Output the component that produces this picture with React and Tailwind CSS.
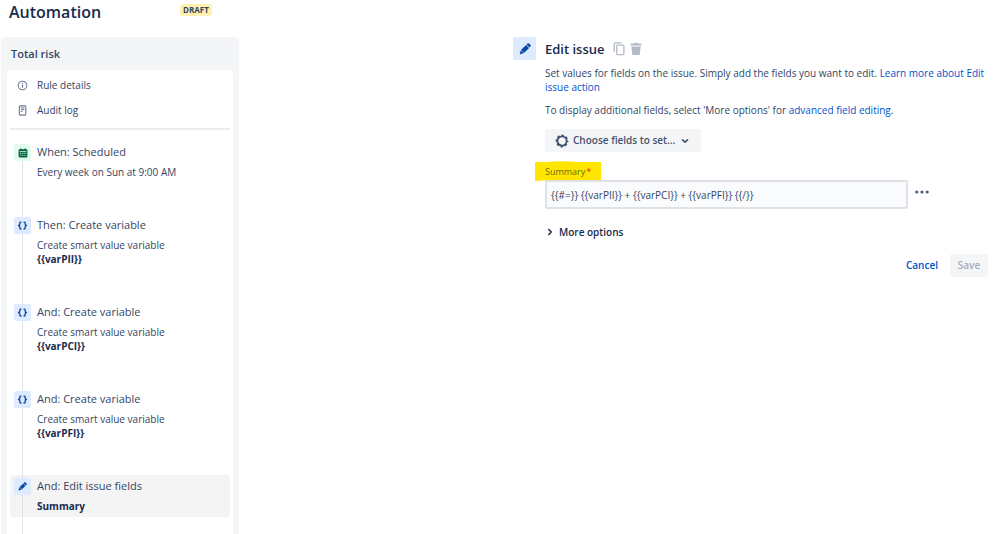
const steps = [
  { title: "When: Scheduled", text: "Every week on Sun at 9:00 AM", icon: "calendar" },
  { title: "Then: Create variable", text: "Create smart value variable", value: "{{varPII}}", icon: "braces" },
  { title: "And: Create variable", text: "Create smart value variable", value: "{{varPCI}}", icon: "braces" },
  { title: "And: Create variable", text: "Create smart value variable", value: "{{varPFI}}", icon: "braces" },
  { title: "And: Edit issue fields", value: "Summary", icon: "pencil", selected: true },
];

function Pencil({ className }) {
  return (
    <svg viewBox="0 0 16 16" className={className} fill="currentColor" aria-hidden="true">
      <path d="M9.300 2.600 13.400 6.700 7.100 13 3 8.900Z" />
      <path d="M9.900 2 10.900 1a2 2 0 0 1 2.800 0l1.300 1.300a2 2 0 0 1 0 2.800l-1 1Z" />
      <path d="M2.700 9.300 6.700 13.300 1.700 15a.6.6 0 0 1-.7-.7Z" />
    </svg>
  );
}

function Braces() {
  return (
    <svg viewBox="0 0 12 12" className="size-[11px]" fill="none" stroke="currentColor" strokeWidth="1.400" strokeLinecap="round" strokeLinejoin="round" aria-hidden="true">
      <path d="M4.400 2.200H4Q3.100 2.200 3.100 3.100V4.700Q3.100 5.700 1.700 6Q3.100 6.300 3.100 7.300V8.900Q3.100 9.800 4 9.800h.4" />
      <path d="M7.600 2.200H8Q8.900 2.200 8.900 3.100V4.700Q8.900 5.700 10.300 6Q8.900 6.300 8.900 7.300V8.900Q8.900 9.800 8 9.800h-.4" />
    </svg>
  );
}

function Calendar() {
  return (
    <svg viewBox="0 0 10 10" className="size-[10px]" aria-hidden="true">
      <path fill="currentColor" d="M1.600 1.200h.6V.5h1.300v.7h3V.5h1.300v.7h.6a1 1 0 0 1 1 1V8.500a1 1 0 0 1-1 1H1.600a1 1 0 0 1-1-1V2.200a1 1 0 0 1 1-1Z" />
      <path stroke="#e3fcef" strokeWidth=".8" d="M1.600 3.600H8.400" />
      <path stroke="#b5e6cd" strokeWidth=".9" strokeDasharray="1.1 .7" d="M2 5.400H8.200M2 7.300H8.200" />
    </svg>
  );
}

function StepIcon({ name }) {
  if (name === "calendar") {
    return <span className="flex size-[17px] shrink-0 items-center justify-center rounded-xs bg-[#e3fcef] text-[#006644]"><Calendar /></span>;
  }
  return (
    <span className="flex size-[17px] shrink-0 items-center justify-center rounded-xs bg-[#deebff] text-[#0747a6]">
      {name === "braces" ? <Braces /> : <Pencil className="size-[9px]" />}
    </span>
  );
}

function Step({ step, first }) {
  return (
    <li>
      <button type="button" className={`flex w-full gap-[6px] rounded-[3px] pl-1 text-left ${step.selected ? "bg-[#f4f4f5]" : ""}`}>
        <span className="flex w-[17px] flex-col items-center self-stretch">
          <span className={`h-[3px] w-px ${first ? "" : "bg-[#dfe1e6]"}`} />
          <StepIcon name={step.icon} />
          <span className="w-px flex-1 bg-[#dfe1e6]" />
        </span>
        <span className="flex flex-col pt-[2px] pb-1 text-[10px] leading-[14px]">
          <span className="mb-[5px] text-[11px] leading-[17px]">{step.title}</span>
          {step.text && <span>{step.text}</span>}
          {step.value && <strong className="font-bold text-[#172b4d]">{step.value}</strong>}
        </span>
      </button>
      <div className="flex h-[31px] pl-1">
        <span className="flex w-[17px] justify-center"><span className="w-px bg-[#dfe1e6]" /></span>
      </div>
    </li>
  );
}

function Sidebar() {
  return (
    <aside className="w-[238px] shrink-0 rounded-t-[5px] bg-[#f4f5f7] px-[6px]">
      <h2 className="px-1 pt-2 pb-[7px] text-[11px] leading-[18px] font-semibold text-[#344563]">Total risk</h2>
      <div className="rounded-t-[5px] bg-white px-[3px] pt-[3px]">
        <nav className="flex flex-col border-b-2 border-[#ebecf0] pb-[5px] text-[10px]">
          <a href="#details" className="flex h-[25px] items-center gap-[9px] pl-[7px]">
            <svg viewBox="0 0 12 12" className="size-[11px] text-[#6b778c]" fill="none" stroke="currentColor" aria-hidden="true">
              <circle cx="6" cy="6" r="4.700" strokeWidth="1.100" />
              <path d="M6 5.500V8.500M6 3.400V4.500" strokeWidth="1.300" />
            </svg>
            Rule details
          </a>
          <a href="#audit" className="flex h-[25px] items-center gap-[9px] pl-[7px]">
            <svg viewBox="0 0 12 12" className="size-[11px] text-[#6b778c]" fill="none" stroke="currentColor" aria-hidden="true">
              <rect x="2.600" y="1" width="7" height="10" rx="1" strokeWidth="1.200" />
              <path d="M4.200 3.400H8M4.200 5.200H8M4.200 7H6" strokeWidth="1.100" />
            </svg>
            Audit log
          </a>
        </nav>
        <ol className="pt-[11px]">
          {steps.map((step, i) => <Step key={i} step={step} first={i === 0} />)}
        </ol>
      </div>
    </aside>
  );
}

function Gear() {
  return (
    <svg viewBox="0 0 14 14" className="size-[14px]" fill="none" stroke="currentColor" aria-hidden="true">
      <circle cx="7" cy="7" r="4.600" strokeWidth="1.800" />
      <circle cx="7" cy="7" r="5.700" strokeWidth="1.400" strokeDasharray="2.400 2.077" strokeDashoffset="1.200" />
    </svg>
  );
}

function EditIssue() {
  return (
    <main className="flex w-[475px] gap-[9px]">
      <span className="flex size-[23px] shrink-0 items-center justify-center rounded-xs bg-[#deebff] text-[#0747a6]">
        <Pencil className="size-[12px]" />
      </span>
      <form className="min-w-0 flex-1" onSubmit={(e) => e.preventDefault()}>
        <div className="flex h-6 items-center">
          <h2 className="mr-2 text-[13px] leading-5 font-semibold text-[#172b4d]">Edit issue</h2>
          <button type="button" aria-label="Copy" className="mr-[5px] text-[#b3bac5]">
            <svg viewBox="0 0 12 14" className="h-[14px] w-[12px]" fill="none" stroke="currentColor" strokeWidth="1.300" aria-hidden="true">
              <path d="M1.200 9.800V1.700a.8.8 0 0 1 .8-.8H8.400" />
              <rect x="3.700" y="3.200" width="7.200" height="9.400" rx=".9" />
            </svg>
          </button>
          <button type="button" aria-label="Delete" className="text-[#b3bac5]">
            <svg viewBox="0 0 12 14" className="h-[14px] w-[12px]" fill="currentColor" aria-hidden="true">
              <path d="M.5 2.200a.6.6 0 0 1 .6-.6H4L4.600.8H7.400L8 1.600h2.900a.6.6 0 0 1 .6.600V3.500H.5ZM1.300 4.500h9.400L9.800 12a1 1 0 0 1-1 .9H3.200a1 1 0 0 1-1-.9Z" />
            </svg>
          </button>
        </div>
        <p className="mt-[5px] text-[10px] leading-[14px]">
          Set values for fields on the issue. Simply add the fields you want to edit.{" "}
          <a href="#learn" className="text-[#0052cc]">Learn more about Edit issue action</a>
        </p>
        <p className="mt-[9px] text-[10px] leading-[14px]">
          To display additional fields, select 'More options' for{" "}
          <a href="#advanced" className="text-[#0052cc]">advanced field editing</a>.
        </p>
        <button type="button" className="mt-3 flex h-[23px] items-center rounded-xs bg-[#f4f5f7] px-[10px] text-[10px] font-semibold text-[#42526e]">
          <Gear />
          <span className="mr-[6px] ml-1">Choose fields to set...</span>
          <svg viewBox="0 0 8 8" className="mr-[2px] size-2" fill="none" stroke="currentColor" strokeWidth="1.600" strokeLinecap="round" strokeLinejoin="round" aria-hidden="true">
            <path d="M1.500 2.800 4 5.200 6.500 2.800" />
          </svg>
        </button>
        <div className="relative mt-[13px] flex h-[14px]">
          <svg viewBox="0 0 66 20" className="absolute -top-1 -left-[10px] h-5 w-[66px] text-[#ffe600]" fill="currentColor" aria-hidden="true">
            <path d="M0 1H12Q22-.3 34 .5L42 1H66V19H16L0 20Z" />
          </svg>
          <label htmlFor="summary" className="relative text-[9px] leading-[14px] font-medium text-[#6b7000]">
            Summary<span className="pl-px text-[#de350b]">*</span>
          </label>
        </div>
        <div className="mt-px flex gap-[7px]">
          <input id="summary" type="text" defaultValue="{{#=}} {{varPII}} + {{varPCI}} + {{varPFI}} {{/}}" className="h-[29px] w-[363px] min-w-0 rounded-xs border-2 border-[#dfe1e6] bg-[#fafbfc] px-1 text-[10px] text-[#344563]" />
          <button type="button" aria-label="More actions" className="h-[23px] text-[#505f79]">
            <svg viewBox="0 0 14 4" className="h-1 w-[14px]" fill="currentColor" aria-hidden="true">
              <circle cx="1.800" cy="2" r="1.600" /><circle cx="7" cy="2" r="1.600" /><circle cx="12.200" cy="2" r="1.600" />
            </svg>
          </button>
        </div>
        <button type="button" className="mt-[15px] ml-[1px] flex h-4 items-center gap-[5px] text-[10px] font-semibold text-[#172b4d]">
          <svg viewBox="0 0 8 8" className="size-2" fill="none" stroke="currentColor" strokeWidth="1.600" strokeLinecap="round" strokeLinejoin="round" aria-hidden="true">
            <path d="M2.800 1.500 5.300 4 2.800 6.500" />
          </svg>
          More options
        </button>
        <div className="mt-[14px] flex h-[23px] justify-end gap-3 text-[10px] font-semibold">
          <button type="button" className="text-[#0052cc]">Cancel</button>
          <button type="submit" disabled className="w-[38px] rounded-xs bg-[#f4f5f7] text-[#a5adba]">Save</button>
        </div>
      </form>
    </main>
  );
}

export default function App() {
  return (
    <div className="flex h-screen flex-col overflow-hidden bg-white font-['Segoe_UI','Open_Sans',sans-serif] text-[#344563]">
      <header className="flex h-[37px] shrink-0 gap-[79px] pl-[9px]">
        <h1 className="text-[16px] leading-6 font-semibold text-[#172b4d]">Automation</h1>
        <span className="mt-1 h-3 rounded-xs bg-[#fff0b3] px-[3px] text-[8px] leading-[12px] font-bold text-[#344563]">DRAFT</span>
      </header>
      <div className="flex flex-1 items-start justify-between pr-[11px] pl-px">
        <Sidebar />
        <EditIssue />
      </div>
    </div>
  );
}
